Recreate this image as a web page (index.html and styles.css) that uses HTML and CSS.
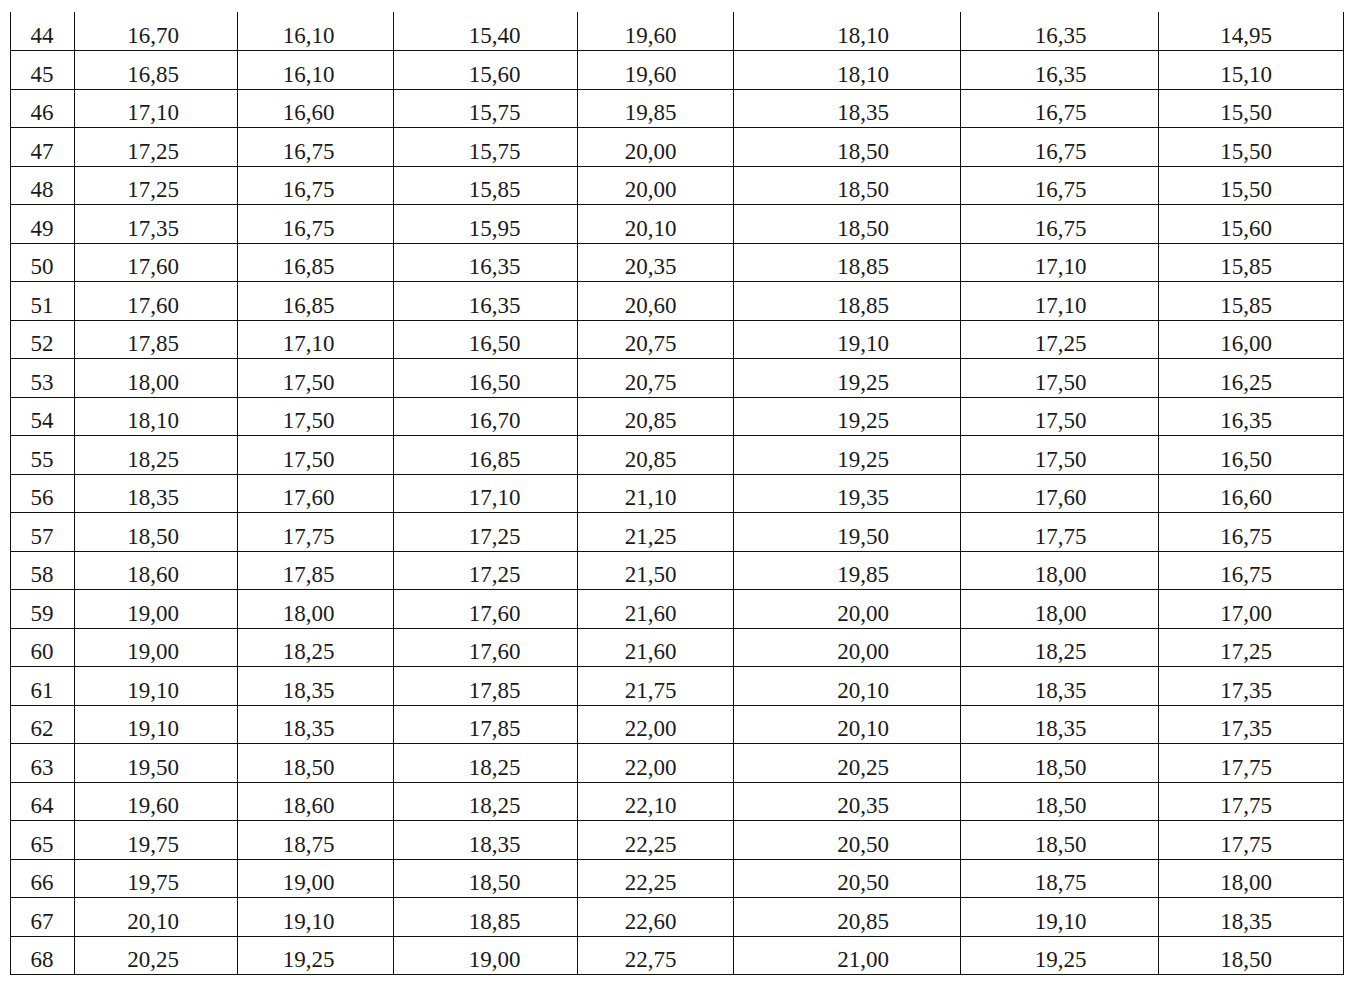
FILE: index.html
```html
<!DOCTYPE html>
<html>
<head>
<meta charset="utf-8">
<link rel="stylesheet" href="styles.css">
</head>
<body>
<table class="grid">
<colgroup>
<col class="c0"><col class="c1"><col class="c2"><col class="c3"><col class="c4"><col class="c5"><col class="c6"><col class="c7">
</colgroup>
<tbody>
<tr><td>44</td><td>16,70</td><td>16,10</td><td>15,40</td><td>19,60</td><td>18,10</td><td>16,35</td><td>14,95</td></tr>
<tr><td>45</td><td>16,85</td><td>16,10</td><td>15,60</td><td>19,60</td><td>18,10</td><td>16,35</td><td>15,10</td></tr>
<tr><td>46</td><td>17,10</td><td>16,60</td><td>15,75</td><td>19,85</td><td>18,35</td><td>16,75</td><td>15,50</td></tr>
<tr><td>47</td><td>17,25</td><td>16,75</td><td>15,75</td><td>20,00</td><td>18,50</td><td>16,75</td><td>15,50</td></tr>
<tr><td>48</td><td>17,25</td><td>16,75</td><td>15,85</td><td>20,00</td><td>18,50</td><td>16,75</td><td>15,50</td></tr>
<tr><td>49</td><td>17,35</td><td>16,75</td><td>15,95</td><td>20,10</td><td>18,50</td><td>16,75</td><td>15,60</td></tr>
<tr><td>50</td><td>17,60</td><td>16,85</td><td>16,35</td><td>20,35</td><td>18,85</td><td>17,10</td><td>15,85</td></tr>
<tr><td>51</td><td>17,60</td><td>16,85</td><td>16,35</td><td>20,60</td><td>18,85</td><td>17,10</td><td>15,85</td></tr>
<tr><td>52</td><td>17,85</td><td>17,10</td><td>16,50</td><td>20,75</td><td>19,10</td><td>17,25</td><td>16,00</td></tr>
<tr><td>53</td><td>18,00</td><td>17,50</td><td>16,50</td><td>20,75</td><td>19,25</td><td>17,50</td><td>16,25</td></tr>
<tr><td>54</td><td>18,10</td><td>17,50</td><td>16,70</td><td>20,85</td><td>19,25</td><td>17,50</td><td>16,35</td></tr>
<tr><td>55</td><td>18,25</td><td>17,50</td><td>16,85</td><td>20,85</td><td>19,25</td><td>17,50</td><td>16,50</td></tr>
<tr><td>56</td><td>18,35</td><td>17,60</td><td>17,10</td><td>21,10</td><td>19,35</td><td>17,60</td><td>16,60</td></tr>
<tr><td>57</td><td>18,50</td><td>17,75</td><td>17,25</td><td>21,25</td><td>19,50</td><td>17,75</td><td>16,75</td></tr>
<tr><td>58</td><td>18,60</td><td>17,85</td><td>17,25</td><td>21,50</td><td>19,85</td><td>18,00</td><td>16,75</td></tr>
<tr><td>59</td><td>19,00</td><td>18,00</td><td>17,60</td><td>21,60</td><td>20,00</td><td>18,00</td><td>17,00</td></tr>
<tr><td>60</td><td>19,00</td><td>18,25</td><td>17,60</td><td>21,60</td><td>20,00</td><td>18,25</td><td>17,25</td></tr>
<tr><td>61</td><td>19,10</td><td>18,35</td><td>17,85</td><td>21,75</td><td>20,10</td><td>18,35</td><td>17,35</td></tr>
<tr><td>62</td><td>19,10</td><td>18,35</td><td>17,85</td><td>22,00</td><td>20,10</td><td>18,35</td><td>17,35</td></tr>
<tr><td>63</td><td>19,50</td><td>18,50</td><td>18,25</td><td>22,00</td><td>20,25</td><td>18,50</td><td>17,75</td></tr>
<tr><td>64</td><td>19,60</td><td>18,60</td><td>18,25</td><td>22,10</td><td>20,35</td><td>18,50</td><td>17,75</td></tr>
<tr><td>65</td><td>19,75</td><td>18,75</td><td>18,35</td><td>22,25</td><td>20,50</td><td>18,50</td><td>17,75</td></tr>
<tr><td>66</td><td>19,75</td><td>19,00</td><td>18,50</td><td>22,25</td><td>20,50</td><td>18,75</td><td>18,00</td></tr>
<tr><td>67</td><td>20,10</td><td>19,10</td><td>18,85</td><td>22,60</td><td>20,85</td><td>19,10</td><td>18,35</td></tr>
<tr><td>68</td><td>20,25</td><td>19,25</td><td>19,00</td><td>22,75</td><td>21,00</td><td>19,25</td><td>18,50</td></tr>
</tbody>
</table>
</body>
</html>
```
FILE: styles.css
```css
html, body {
  margin: 0;
  padding: 0;
  background: #ffffff;
}
body {
  padding: 12px 0 0 10px;
  font-family: "Liberation Serif", "Times New Roman", serif;
  color: #1a1a1a;
}
.grid {
  border-collapse: collapse;
  table-layout: fixed;
  width: 1333px;
}
.c0 { width: 64px; }
.c1 { width: 163px; }
.c2 { width: 156px; }
.c3 { width: 184px; }
.c4 { width: 156px; }
.c5 { width: 227px; }
.c6 { width: 198px; }
.c7 { width: 185px; }
.grid td {
  border: 1px solid #111111;
  border-top: none;
  height: 38.5px;
  padding: 0 0 2px 0;
  box-sizing: border-box;
  text-align: center;
  vertical-align: bottom;
  font-size: 23px;
  line-height: 24px;
}
.grid tr + tr td {
  border-top: 1px solid #111111;
}
.grid td:nth-child(1) { padding-right: 1px; }
.grid td:nth-child(2) { padding-right: 6px; }
.grid td:nth-child(3) { padding-right: 14px; }
.grid td:nth-child(4) { padding-left: 18px; }
.grid td:nth-child(5) { padding-right: 10px; }
.grid td:nth-child(6) { padding-left: 32px; }
.grid td:nth-child(7) { padding-left: 2px; }
.grid td:nth-child(8) { padding-right: 10px; }
```
